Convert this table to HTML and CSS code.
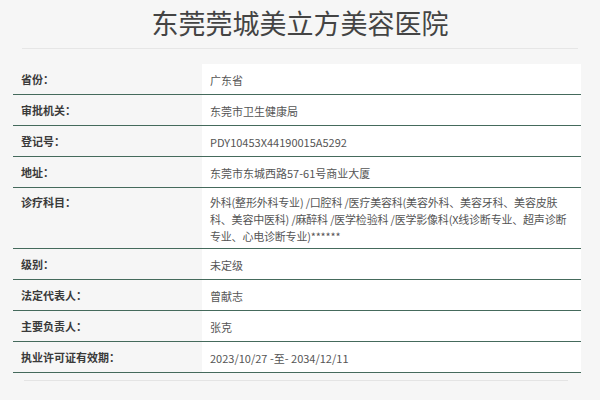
FILE: index.html
```html
<!DOCTYPE html>
<html lang="zh-CN">
<head>
<meta charset="utf-8">
<link rel="stylesheet" href="styles.css">
</head>
<body>
<div class="page">
  <h1 class="title">东莞莞城美立方美容医院</h1>
  <div class="info">
    <div class="row"><div class="label">省份：</div><div class="value">广东省</div></div>
    <div class="row"><div class="label">审批机关：</div><div class="value">东莞市卫生健康局</div></div>
    <div class="row"><div class="label">登记号：</div><div class="value">PDY10453X44190015A5292</div></div>
    <div class="row"><div class="label">地址：</div><div class="value">东莞市东城西路57-61号商业大厦</div></div>
    <div class="row tall"><div class="label">诊疗科目：</div><div class="value">外科(整形外科专业) /口腔科 /医疗美容科(美容外科、美容牙科、美容皮肤<br>科、美容中医科) /麻醉科 /医学检验科 /医学影像科(X线诊断专业、超声诊断<br>专业、心电诊断专业)******</div></div>
    <div class="row"><div class="label">级别：</div><div class="value">未定级</div></div>
    <div class="row"><div class="label">法定代表人：</div><div class="value">曾献志</div></div>
    <div class="row"><div class="label">主要负责人：</div><div class="value">张克</div></div>
    <div class="row"><div class="label">执业许可证有效期：</div><div class="value">2023/10/27 -至- 2034/12/11</div></div>
  </div>
  <div class="foot-line"></div>
</div>
</body>
</html>
```

FILE: styles.css
```css
html, body {
  margin: 0;
  padding: 0;
  background: #f6f6f6;
}
body {
  font-family: "Noto Sans CJK SC", "Noto Sans", sans-serif;
  width: 600px;
  height: 400px;
  overflow: hidden;
}
.page {
  display: flex;
  flex-direction: column;
}
.title {
  margin: 0 22px;
  height: 49px;
  box-sizing: border-box;
  padding-top: 4px;
  font-size: 27px;
  line-height: 38px;
  font-weight: normal;
  color: #444;
  text-align: center;
  border-bottom: 1px solid #e6e6e6;
}
.info {
  margin: 15px 19px 0 13px;
  display: flex;
  flex-direction: column;
}
.row {
  display: grid;
  grid-template-columns: 189px 1fr;
  border-bottom: 1px solid #456a5c;
}
.label, .value {
  min-height: 30px;
  box-sizing: border-box;
  display: flex;
  align-items: center;
  font-size: 11px;
  line-height: 17px;
}
.label {
  padding: 0 8px;
  color: #3a3a3a;
  font-weight: bold;
}
.value {
  padding: 6px 8px 3px;
  color: #555;
  background: #fff;
}
.tall .label {
  align-items: flex-start;
  padding-top: 6px;
}
.tall .value {
  display: block;
  white-space: nowrap;
  letter-spacing: -0.2px;
}
.foot-line {
  margin: 7px 32px 0 24px;
  border-top: 1px solid #e4e4e4;
}
```
